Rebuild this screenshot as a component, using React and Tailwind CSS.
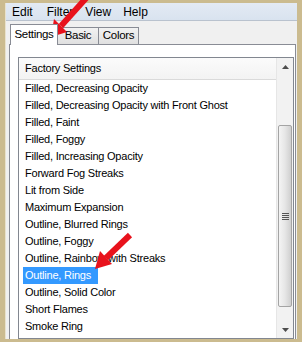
import React from 'react';

const items = [
    'Filled, Decreasing Opacity',
    'Filled, Decreasing Opacity with Front Ghost',
    'Filled, Faint',
    'Filled, Foggy',
    'Filled, Increasing Opacity',
    'Forward Fog Streaks',
    'Lit from Side',
    'Maximum Expansion',
    'Outline, Blurred Rings',
    'Outline, Foggy',
    'Outline, Rainbow with Streaks',
    'Outline, Rings',
    'Outline, Solid Color',
    'Short Flames',
    'Smoke Ring',
];

const Arrow = ({ tip, base, tail, left, right }) => (
    <>
        <line x1={base[0]} y1={base[1]} x2={tail[0]} y2={tail[1]} stroke="#e8121c" strokeWidth="6" />
        <polygon points={`${tip.join(',')} ${left.join(',')} ${right.join(',')}`} fill="#e8121c" />
    </>
);

const App = () => {
    return (
        <div
            className="relative w-[302px] h-[342px] overflow-hidden bg-[#cbbb8f] pt-[3px] pl-[5px] pr-[5px] pb-[3px]"
            style={{ fontFamily: '"Liberation Sans", Arial, sans-serif' }}
        >
            <div className="flex h-full flex-col bg-[#f0f0f0] border-l border-[#e9e2cc]">
                {/* menu bar */}
                <div className="flex h-[18px] items-center border-b border-[#b9c2ce] bg-gradient-to-b from-[#e3eaf4] to-[#d9e3ef] text-[12px] text-black">
                    <span className="ml-[6px]">Edit</span>
                    <span className="ml-[14px]">Filter</span>
                    <span className="ml-[12px]">View</span>
                    <span className="ml-[12px]">Help</span>
                </div>

                {/* tabs */}
                <div className="flex h-[23px] items-end pl-[4px] text-[11.5px] tracking-[-0.3px] text-black">
                    <div className="relative z-10 -mb-px flex h-[21px] w-[48px] items-center justify-center border border-b-0 border-[#898c95] bg-white pb-[1px]">
                        Settings
                    </div>
                    <div className="flex h-[17px] w-[41px] items-center justify-center border border-b-0 border-l-0 border-[#898c95] bg-gradient-to-b from-[#f2f2f2] to-[#e0e0e0]">
                        Basic
                    </div>
                    <div className="flex h-[17px] w-[40px] items-center justify-center border border-b-0 border-l-0 border-[#898c95] bg-gradient-to-b from-[#f2f2f2] to-[#e0e0e0]">
                        Colors
                    </div>
                </div>

                {/* panel */}
                <div className="ml-[3px] mr-[1px] flex flex-1 flex-col border border-b-0 border-[#898c95] bg-white pl-[8px] pr-[1px] pt-[12px]">
                    <div className="flex flex-1 border border-[#828790] bg-white">
                        <div className="flex flex-1 flex-col text-[11px] tracking-[-0.22px] text-black">
                            <div className="flex h-[22px] shrink-0 items-center border-b border-[#dadada] bg-gradient-to-b from-[#fbfbfb] to-[#f3f3f3] pl-[6px]">
                                Factory Settings
                            </div>
                            {items.map((name) => {
                                const selected = name === 'Outline, Rings';
                                return (
                                    <div key={name} className="flex h-[17px] shrink-0 items-center pl-[4px] whitespace-nowrap">
                                        <span className={selected ? 'flex h-[17px] items-center bg-[#3399ff] pl-[2px] pr-[7px] text-white' : 'px-[2px]'}>
                                            {name}
                                        </span>
                                    </div>
                                );
                            })}
                        </div>

                        {/* scrollbar */}
                        <div className="flex w-[17px] shrink-0 flex-col border-l border-[#e6e6e6] bg-[#f2f2f2]">
                            <div className="flex h-[17px] items-center justify-center">
                                <svg width="7" height="4" viewBox="0 0 7 4"><polygon points="3.5,0 7,4 0,4" fill="#4d4d4d" /></svg>
                            </div>
                            <div className="h-[50px]" />
                            <div className="mx-[1px] flex h-[182px] items-center justify-center rounded-[2px] border border-[#a4a4a4] bg-gradient-to-r from-[#f4f4f4] via-[#e6e6e6] to-[#cfcfcf]">
                                <div className="flex flex-col gap-[1px]">
                                    <div className="h-px w-[7px] bg-[#555]" />
                                    <div className="h-px w-[7px] bg-[#555]" />
                                    <div className="h-px w-[7px] bg-[#555]" />
                                    <div className="h-px w-[7px] bg-[#555]" />
                                </div>
                            </div>
                            <div className="flex-1" />
                            <div className="flex h-[17px] items-center justify-center">
                                <svg width="7" height="4" viewBox="0 0 7 4"><polygon points="0,0 7,0 3.5,4" fill="#4d4d4d" /></svg>
                            </div>
                        </div>
                    </div>
                </div>
            </div>

            {/* annotation arrows */}
            <svg className="pointer-events-none absolute left-0 top-0" width="302" height="342" viewBox="0 0 302 342">
                <Arrow tip={[51, 37]} base={[61, 26]} tail={[88, -4]} left={[54, 19]} right={[67, 32]} />
                <Arrow tip={[95, 269]} base={[106, 258]} tail={[130, 235]} left={[100, 251]} right={[112, 264]} />
            </svg>
        </div>
    );
};

export default App;
